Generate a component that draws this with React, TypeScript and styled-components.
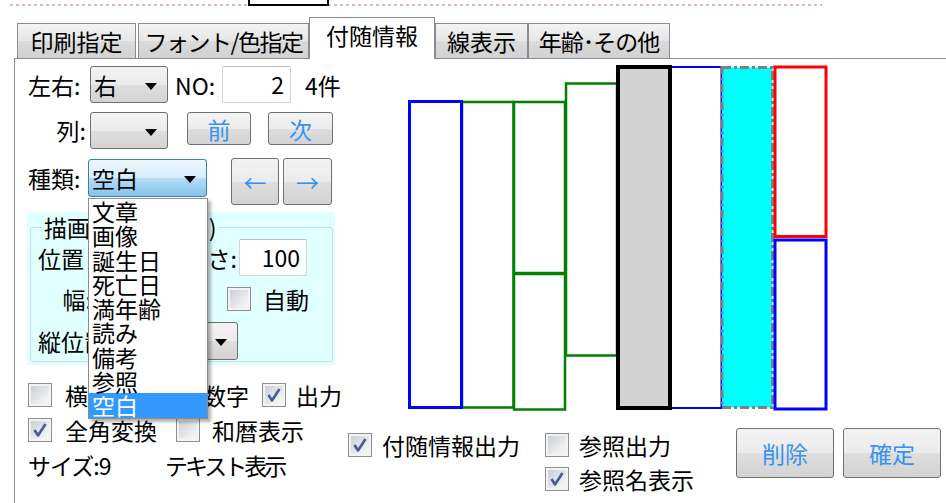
import React from 'react';
import styled, { createGlobalStyle, css } from 'styled-components';

const GlobalStyle = createGlobalStyle`
  html, body { margin: 0; padding: 0; background: #fff; }
  body {
    font-family: "Noto Sans CJK JP", "Noto Sans", sans-serif;
    font-size: 23px;
    line-height: 24px;
    color: #000;
    overflow: hidden;
  }
  * { box-sizing: border-box; }
`;

const Page = styled.div`
  width: 946px;
  height: 503px;
  overflow: hidden;
  position: relative;
`;

/* ---------- top strip ---------- */
const TopStrip = styled.div`
  position: relative;
  height: 17px;
  padding-top: 4px;
`;
const DottedLine = styled.div`
  margin-left: 10px;
  width: 812px;
  height: 2px;
  background: repeating-linear-gradient(90deg, #e3b5b5 0 3px, transparent 3px 6px);
`;
const FrameBox = styled.div`
  position: absolute;
  left: 248px;
  top: -20px;
  width: 81px;
  height: 26px;
  border: 2px solid #000;
  background: #fff;
`;

/* ---------- tabs ---------- */
const TabBar = styled.div`
  display: flex;
  align-items: flex-end;
  height: 42px;
  margin-left: 14px;
  padding-left: 3px;
  border-bottom: 1px solid #898c95;
`;
const Tab = styled.div<{ $w: number; $ml?: number; $active?: boolean; $ls?: number }>`
  width: ${p => p.$w}px;
  margin-left: ${p => p.$ml ?? 0}px;
  height: 35px;
  display: flex;
  align-items: center;
  justify-content: center;
  border: 1px solid #898c95;
  border-bottom: none;
  background: linear-gradient(#f3f3f3, #e6e6e6 50%, #dadada 51%, #d2d2d2);
  white-space: nowrap;
  letter-spacing: ${p => p.$ls ?? 0}px;
  ${p => p.$active && css`
    height: 42px;
    margin-bottom: -1px;
    padding-bottom: 7px;
    background: #fff;
    position: relative;
    z-index: 1;
  `}
`;

/* ---------- panel ---------- */
const Panel = styled.div`
  margin-left: 14px;
  border-left: 1px solid #898c95;
  height: 444px;
  display: grid;
  grid-template-columns: 331px 1fr;
`;
const LeftCol = styled.div`
  display: flex;
  flex-direction: column;
`;
const Row = styled.div<{ $mt: number; $h: number; $align?: string }>`
  display: flex;
  align-items: ${p => p.$align ?? 'center'};
  margin-top: ${p => p.$mt}px;
  height: ${p => p.$h}px;
  padding-left: 13px;
  white-space: nowrap;
`;
const Label = styled.div<{ $w?: number; $h?: number; $mr?: number; $ml?: number; $right?: boolean; $ls?: number }>`
  width: ${p => (p.$w ? `${p.$w}px` : 'auto')};
  height: ${p => (p.$h ? `${p.$h}px` : 'auto')};
  line-height: ${p => (p.$h ? `${p.$h}px` : '24px')};
  margin-right: ${p => p.$mr ?? 0}px;
  margin-left: ${p => p.$ml ?? 0}px;
  text-align: ${p => (p.$right ? 'right' : 'left')};
  letter-spacing: ${p => p.$ls ?? 0}px;
  white-space: nowrap;
  flex: none;
`;

const ComboWrap = styled.div<{ $w: number; $h: number; $ml?: number; $mt?: number }>`
  position: relative;
  width: ${p => p.$w}px;
  height: ${p => p.$h}px;
  margin-left: ${p => p.$ml ?? 0}px;
  margin-top: ${p => p.$mt ?? 0}px;
  flex: none;
`;
const ComboFace = styled.div<{ $focus?: boolean }>`
  width: 100%;
  height: 100%;
  display: flex;
  align-items: center;
  padding-left: 3px;
  padding-right: 10px;
  border: 1px solid #707070;
  border-radius: 3px;
  background: linear-gradient(#f3f3f3, #ebebeb 50%, #dedede 51%, #d3d3d3);
  ${p => p.$focus && css`
    border-color: #3c7fb1;
    background: linear-gradient(#eef7fd, #d6edfb 50%, #b4dcf6 51%, #86c3ea);
  `}
`;
const ComboText = styled.span`
  flex: 1;
  line-height: 24px;
`;
const Arrow = styled.span`
  width: 0;
  height: 0;
  margin-top: 3px;
  border-left: 6px solid transparent;
  border-right: 6px solid transparent;
  border-top: 7px solid #000;
`;

const DropList = styled.div`
  position: absolute;
  left: 0;
  top: calc(100% + 1px);
  width: 120px;
  border: 1px solid #8c8c8c;
  background: #fff;
  box-shadow: 3px 3px 3px rgba(0, 0, 0, 0.3);
  z-index: 20;
`;
const DropItem = styled.div<{ $sel?: boolean }>`
  height: 24.3px;
  line-height: 24px;
  padding-left: 3px;
  white-space: nowrap;
  ${p => p.$sel && css`
    background: #3399ff;
    color: #fff;
  `}
`;

const TextBox = styled.div<{ $w: number; $h: number; $ml?: number }>`
  width: ${p => p.$w}px;
  height: ${p => p.$h}px;
  margin-left: ${p => p.$ml ?? 0}px;
  flex: none;
  border: 1px solid #cfd5dc;
  border-top-color: #b9bec6;
  border-radius: 2px;
  background: #fff;
  text-align: right;
  padding-right: 6px;
  line-height: ${p => p.$h - 2}px;
`;

const Btn = styled.div<{ $w: number; $h: number; $ml?: number }>`
  width: ${p => p.$w}px;
  height: ${p => p.$h}px;
  margin-left: ${p => p.$ml ?? 0}px;
  flex: none;
  display: flex;
  align-items: center;
  justify-content: center;
  border: 1px solid #707070;
  border-radius: 3px;
  background: linear-gradient(#f3f3f3, #ebebeb 50%, #dedede 51%, #d3d3d3);
  color: #3592ef;
  line-height: 24px;
`;

/* ---------- group ---------- */
const Group = styled.div`
  margin-top: 7px;
  margin-left: 12px;
  width: 308px;
  height: 153px;
  background: #e0ffff;
  padding: 3px 2px 3px 3px;
`;
const Frame = styled.fieldset`
  margin: 0;
  padding: 0;
  min-width: 0;
  height: 147px;
  border: 1px solid #cfdbe2;
  border-radius: 3px;
`;
const Legend = styled.legend`
  margin-left: 11px;
  padding: 0 2px;
  line-height: 24px;
`;
const GRow = styled.div<{ $mt: number; $h: number }>`
  display: flex;
  align-items: center;
  margin-top: ${p => p.$mt}px;
  height: ${p => p.$h}px;
  padding-left: 7px;
  white-space: nowrap;
`;

/* ---------- checkbox ---------- */
const CheckBoxFace = styled.div`
  width: 24px;
  height: 24px;
  flex: none;
  border: 1px solid #8f8f8f;
  background: linear-gradient(135deg, #c5c9cf, #eef0f2 70%, #f8f8f8);
  box-shadow: inset 0 0 0 2px #f3f3f3;
`;
const CheckItem = styled.div<{ $w?: number; $gap?: number }>`
  display: flex;
  align-items: center;
  gap: ${p => p.$gap ?? 13}px;
  width: ${p => (p.$w ? `${p.$w}px` : 'auto')};
  flex: none;
  white-space: nowrap;
`;

const CheckBox: React.FC<{ checked?: boolean }> = ({ checked }) => (
  <CheckBoxFace>
    {checked && (
      <svg width="22" height="22" viewBox="0 0 22 22" style={{ display: 'block' }}>
        <path d="M5.5 11 L9 16.5 L16.5 5" fill="none" stroke="#475b94" strokeWidth="2.6" strokeLinejoin="round" />
      </svg>
    )}
  </CheckBoxFace>
);

/* ---------- right ---------- */
const RightCol = styled.div`
  display: flex;
  flex-direction: column;
`;
const Drawing = styled.svg`
  display: block;
  margin-left: 54px;
  margin-top: 1px;
  flex: none;
`;
const BottomRow = styled.div`
  display: flex;
  align-items: flex-start;
  margin-top: 8px;
  padding-left: 2px;
`;
const BCol = styled.div<{ $w: number }>`
  width: ${p => p.$w}px;
  padding-top: 5px;
  display: flex;
  flex-direction: column;
  gap: 10px;
  flex: none;
`;

const kinds = ['文章', '画像', '誕生日', '死亡日', '満年齢', '読み', '備考', '参照', '空白'];

export default function App() {
  return (
    <Page>
      <GlobalStyle />
      <TopStrip>
        <DottedLine />
        <FrameBox />
      </TopStrip>

      <TabBar>
        <Tab $w={119}>印刷指定</Tab>
        <Tab $w={171} $ml={2} $ls={-1.5}>フォント/色指定</Tab>
        <Tab $w={126} $active>付随情報</Tab>
        <Tab $w={93}>線表示</Tab>
        <Tab $w={142} $ls={-1}>年齢･その他</Tab>
      </TabBar>

      <Panel>
        <LeftCol>
          <Row $mt={7} $h={37}>
            <Label $w={62}>左右:</Label>
            <ComboWrap $w={78} $h={37}>
              <ComboFace>
                <ComboText>右</ComboText>
                <Arrow />
              </ComboFace>
            </ComboWrap>
            <Label $ml={7} $w={47}>NO:</Label>
            <TextBox $w={69} $h={37}>2</TextBox>
            <Label $ml={14}>4件</Label>
          </Row>

          <Row $mt={9} $h={38} $align="flex-start">
            <Label $w={58} $h={37} $mr={4} $right>列:</Label>
            <ComboWrap $w={78} $h={37}>
              <ComboFace>
                <ComboText />
                <Arrow />
              </ComboFace>
            </ComboWrap>
            <Btn $w={64} $h={33} $ml={19}>前</Btn>
            <Btn $w={65} $h={33} $ml={17}>次</Btn>
          </Row>

          <Row $mt={8} $h={47} $align="flex-start">
            <Label $w={60} $h={38} style={{ marginTop: 1 }}>種類:</Label>
            <ComboWrap $w={119} $h={38} $mt={1}>
              <ComboFace $focus>
                <ComboText>空白</ComboText>
                <Arrow />
              </ComboFace>
              <DropList>
                {kinds.map(k => (
                  <DropItem key={k} $sel={k === '空白'}>{k}</DropItem>
                ))}
              </DropList>
            </ComboWrap>
            <Btn $w={48} $h={47} $ml={24}>←</Btn>
            <Btn $w={49} $h={47} $ml={4}>→</Btn>
          </Row>

          <Group>
            <Frame>
              <Legend>描画サイズ(mm)</Legend>
              <GRow $mt={0} $h={37}>
                <Label>位置</Label>
                <ComboWrap $w={90} $h={37} $ml={6}>
                  <ComboFace>
                    <ComboText />
                    <Arrow />
                  </ComboFace>
                </ComboWrap>
                <Label $w={57} $mr={2} $right>高さ:</Label>
                <TextBox $w={68} $h={37}>100</TextBox>
              </GRow>
              <GRow $mt={4} $h={37}>
                <Label $w={54} $mr={2} $right>幅:</Label>
                <TextBox $w={88} $h={37} />
                <CheckItem $gap={12} style={{ marginLeft: 45 }}>
                  <CheckBox />
                  <span>自動</span>
                </CheckItem>
              </GRow>
              <GRow $mt={5} $h={38}>
                <Label>縦位置</Label>
                <ComboWrap $w={129} $h={38} $ml={2}>
                  <ComboFace>
                    <ComboText />
                    <Arrow />
                  </ComboFace>
                </ComboWrap>
              </GRow>
            </Frame>
          </Group>

          <Row $mt={18} $h={24}>
            <CheckItem $w={117}>
              <CheckBox />
              <span>横書き</span>
            </CheckItem>
            <CheckItem $w={117} $gap={11}>
              <CheckBox />
              <span>漢数字</span>
            </CheckItem>
            <CheckItem $gap={10}>
              <CheckBox checked />
              <span>出力</span>
            </CheckItem>
          </Row>
          <Row $mt={11} $h={24}>
            <CheckItem $w={148}>
              <CheckBox checked />
              <span>全角変換</span>
            </CheckItem>
            <CheckItem $gap={12}>
              <CheckBox />
              <span>和暦表示</span>
            </CheckItem>
          </Row>
          <Row $mt={11} $h={24}>
            <Label $w={137} $ls={-1}>サイズ:9</Label>
            <Label $ls={-3}>テキスト表示</Label>
          </Row>
        </LeftCol>

        <RightCol>
          <Drawing width={440} height={360} viewBox="400 60 440 360">
            <rect x={462} y={102} width={51.5} height={305.5} fill="#fff" stroke="#008000" strokeWidth={2.5} />
            <rect x={514} y={102} width={51} height={171} fill="#fff" stroke="#008000" strokeWidth={2.5} />
            <rect x={514} y={274} width={51} height={135.5} fill="#fff" stroke="#008000" strokeWidth={2.5} />
            <rect x={566} y={83.5} width={51} height={272} fill="#fff" stroke="#008000" strokeWidth={2.5} />
            <rect x={409.5} y={101.5} width={52} height={306} fill="#fff" stroke="#0000ff" strokeWidth={3} />
            <rect x={671} y={67} width={50.5} height={341} fill="#fff" stroke="#0000ff" strokeWidth={2} />
            <rect x={618} y={67} width={52} height={341} fill="#d3d3d3" stroke="#000" strokeWidth={4} />
            <rect x={722} y={67.5} width={50.5} height={340} fill="#00ffff" stroke="#808080" strokeWidth={3} strokeDasharray="9 3 3 3" />
            <rect x={775} y={67} width={51} height={169.5} fill="#fff" stroke="#ff0000" strokeWidth={3} />
            <rect x={775} y={240} width={51} height={169} fill="#fff" stroke="#0000ff" strokeWidth={3} />
          </Drawing>

          <BottomRow>
            <BCol $w={197}>
              <CheckItem $gap={10}>
                <CheckBox checked />
                <span>付随情報出力</span>
              </CheckItem>
            </BCol>
            <BCol $w={191}>
              <CheckItem $gap={10}>
                <CheckBox />
                <span>参照出力</span>
              </CheckItem>
              <CheckItem $gap={10}>
                <CheckBox checked />
                <span>参照名表示</span>
              </CheckItem>
            </BCol>
            <Btn $w={98} $h={50}>削除</Btn>
            <Btn $w={98} $h={50} $ml={9}>確定</Btn>
          </BottomRow>
        </RightCol>
      </Panel>
    </Page>
  );
}
